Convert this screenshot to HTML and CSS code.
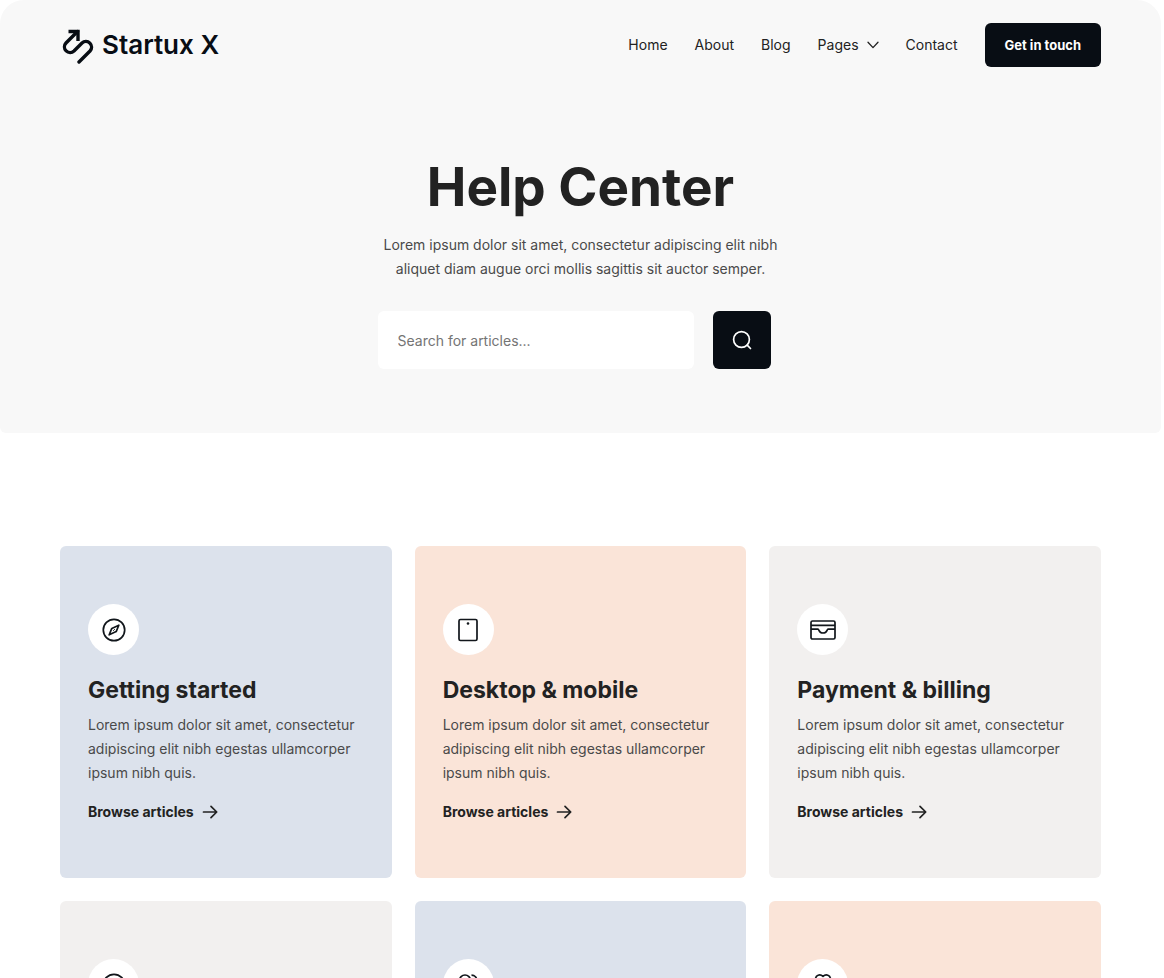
FILE: index.html
```html
<!DOCTYPE html>
<html lang="en">
<head>
<meta charset="utf-8">
<meta name="viewport" content="width=device-width, initial-scale=1">
<title>Help Center – Startux X</title>
<link rel="stylesheet" href="styles.css">
</head>
<body>
<div class="page">
  <div class="hero">
    <header class="header">
      <a class="logo" href="#">
        <svg class="logo-mark" viewBox="0 -2 32 38" fill="none" stroke="currentColor" stroke-width="3.4" aria-hidden="true">
          <path d="M6.500 3.500H16V13"/>
          <path d="M15.500 3.500 4 15A5.660 5.660 0 0 0 12 23L20 15A5.660 5.660 0 0 1 28 23L17 34" stroke-linecap="round"/>
        </svg>
        <span>Startux X</span>
      </a>
      <nav class="nav">
        <a href="#">Home</a>
        <a href="#">About</a>
        <a href="#">Blog</a>
        <a class="nav-pages" href="#">Pages
          <svg class="chevron" viewBox="0 0 12 8" fill="none" stroke="currentColor" stroke-width="1.3" stroke-linecap="round" stroke-linejoin="round" aria-hidden="true"><path d="M1 1.200 6 6.600 11 1.200"/></svg>
        </a>
        <a href="#">Contact</a>
        <a class="button" href="#">Get in touch</a>
      </nav>
    </header>
    <section class="intro">
      <h1>Help Center</h1>
      <p>Lorem ipsum dolor sit amet, consectetur adipiscing elit nibh aliquet diam augue orci mollis sagittis sit auctor semper.</p>
      <form class="search">
        <input class="search-input" type="search" placeholder="Search for articles..." aria-label="Search for articles">
        <button class="search-button" type="submit" aria-label="Search">
          <svg viewBox="0 0 20 20" fill="none" stroke="currentColor" stroke-width="1.7" stroke-linecap="round" aria-hidden="true"><circle cx="9.500" cy="9.500" r="7.900"/><path d="m15.200 15.200 3.300 3.300"/></svg>
        </button>
      </form>
    </section>
  </div>
  <main class="cards">
    <article class="card blue">
      <span class="icon"><svg viewBox="0 0 28 28" aria-hidden="true"><circle cx="14" cy="14" r="10.700"/><path d="M18.800 9.200 16.200 15.600 9.200 18.800 11.800 12.400Z"/><path d="m13.200 14.800 1.600-1.600" stroke-width="1"/></svg></span>
      <h2>Getting started</h2>
      <p>Lorem ipsum dolor sit amet, consectetur adipiscing elit nibh egestas ullamcorper ipsum nibh quis.</p>
      <a class="more" href="#">Browse articles <svg viewBox="0 0 16 14" aria-hidden="true"><path d="M1.500 7H14.500M9 1.300 14.700 7 9 12.700"/></svg></a>
    </article>
    <article class="card peach">
      <span class="icon"><svg viewBox="0 0 28 28" aria-hidden="true"><rect x="5" y="3.500" width="18" height="21" rx="1.500"/><circle class="dot" cx="14" cy="7.500" r="1.300"/></svg></span>
      <h2>Desktop &amp; mobile</h2>
      <p>Lorem ipsum dolor sit amet, consectetur adipiscing elit nibh egestas ullamcorper ipsum nibh quis.</p>
      <a class="more" href="#">Browse articles <svg viewBox="0 0 16 14" aria-hidden="true"><path d="M1.500 7H14.500M9 1.300 14.700 7 9 12.700"/></svg></a>
    </article>
    <article class="card gray">
      <span class="icon"><svg viewBox="0 0 28 28" aria-hidden="true"><rect x="2" y="5" width="24" height="18" rx="1.500"/><path d="M2 9.300H26M2 13.200H9C10.200 13.200 9.800 17 14 17S17.800 13.200 19 13.200H26"/></svg></span>
      <h2>Payment &amp; billing</h2>
      <p>Lorem ipsum dolor sit amet, consectetur adipiscing elit nibh egestas ullamcorper ipsum nibh quis.</p>
      <a class="more" href="#">Browse articles <svg viewBox="0 0 16 14" aria-hidden="true"><path d="M1.500 7H14.500M9 1.300 14.700 7 9 12.700"/></svg></a>
    </article>
    <article class="card gray">
      <span class="icon"><svg viewBox="0 0 28 28" aria-hidden="true"><circle cx="14" cy="14" r="10.700"/></svg></span>
    </article>
    <article class="card blue">
      <span class="icon"><svg viewBox="0 0 28 28" aria-hidden="true"><circle cx="11" cy="9.500" r="5.500"/><path d="M17.500 4.200C24.500 4.200 24.500 14.500 17.500 14.800M2 23C5 16 17 16 20 23M21 17.500C23 18 25 20 26 23"/></svg></span>
    </article>
    <article class="card peach">
      <span class="icon"><svg viewBox="0 0 28 28" aria-hidden="true"><path d="M14 5.400C11 2.600 6.500 4 6.500 8.400C6.500 13 14 18 14 18S21.500 13 21.500 8.400C21.500 4 17 2.600 14 5.400ZM3 19V25H25V19"/></svg></span>
    </article>
  </main>
</div>
</body>
</html>
```

FILE: styles.css
```css
* {
  box-sizing: border-box;
}

body {
  margin: 0;
  background: #fff;
  color: #222;
  font-family: Inter, "Liberation Sans", sans-serif;
  font-size: 14px;
  line-height: 24px;
}

.page {
  height: 100vh;
  margin-right: 3px;
  overflow: hidden;
}

a {
  color: inherit;
  text-decoration: none;
}

h1,
h2,
p {
  margin: 0;
}

.hero {
  padding: 23px 60px 64px;
  background: #f8f8f8;
  border-radius: 24px 24px 6px 6px;
}

.header {
  display: flex;
  align-items: center;
  justify-content: space-between;
}

.logo {
  display: flex;
  align-items: center;
  gap: 8px;
  padding-left: 2px;
  color: #080d14;
  font-size: 26px;
  font-weight: 600;
}

.logo-mark {
  width: 32px;
  height: 38px;
}

.nav {
  display: flex;
  align-items: center;
  gap: 27px;
}

.nav-pages {
  display: flex;
  align-items: center;
  gap: 8px;
}

.chevron {
  width: 12px;
  height: 8px;
}

.button {
  padding: 10px 20px;
  background: #080d14;
  border-radius: 6px;
  color: #fff;
  font-size: 13px;
  font-weight: 700;
}

.intro {
  display: flex;
  flex-direction: column;
  align-items: center;
  padding-top: 88px;
  text-align: center;
}

h1 {
  margin-bottom: 14px;
  font-size: 53px;
  font-weight: 700;
  line-height: 64px;
}

.intro p {
  max-width: 420px;
  color: #4a4a4a;
}

.search {
  display: flex;
  gap: 19px;
  width: 406px;
  margin-top: 30px;
}

.search-input {
  width: 316px;
  height: 58px;
  padding: 0 20px;
  border: 0;
  border-radius: 6px;
  background: #fff;
  color: #222;
  font: inherit;
}

.search-input::placeholder {
  color: #747474;
  opacity: 1;
}

.search-button {
  display: grid;
  place-items: center;
  width: 58px;
  height: 58px;
  padding: 0;
  border: 0;
  border-radius: 6px;
  background: #080d14;
  color: #fff;
}

.search-button svg {
  width: 20px;
  height: 20px;
}

.cards {
  display: grid;
  grid-template-columns: repeat(3, 1fr);
  gap: 23px;
  padding: 113px 60px;
}

.card {
  display: flex;
  flex-direction: column;
  align-items: flex-start;
  min-height: 332px;
  padding: 58px 28px 54px;
  border-radius: 6px;
}

.blue {
  background: #dce2ec;
}

.peach {
  background: #fae4d8;
}

.gray {
  background: #f2f0ef;
}

.icon {
  display: grid;
  place-items: center;
  width: 51px;
  height: 51px;
  border-radius: 50%;
  background: #fff;
}

.icon svg {
  width: 28px;
  height: 28px;
  fill: none;
  stroke: #11161b;
  stroke-width: 1.7;
  stroke-linejoin: round;
}

.icon .dot {
  fill: #11161b;
  stroke: none;
}

h2 {
  margin: 20px 0 8px;
  font-size: 23px;
  font-weight: 700;
  line-height: 30px;
}

.card p {
  color: #4a4a4a;
}

.more {
  display: flex;
  align-items: center;
  gap: 8px;
  margin-top: 15px;
  font-weight: 700;
}

.more svg {
  width: 16px;
  height: 14px;
  fill: none;
  stroke: currentColor;
  stroke-width: 1.7;
  stroke-linecap: round;
  stroke-linejoin: round;
}
```
